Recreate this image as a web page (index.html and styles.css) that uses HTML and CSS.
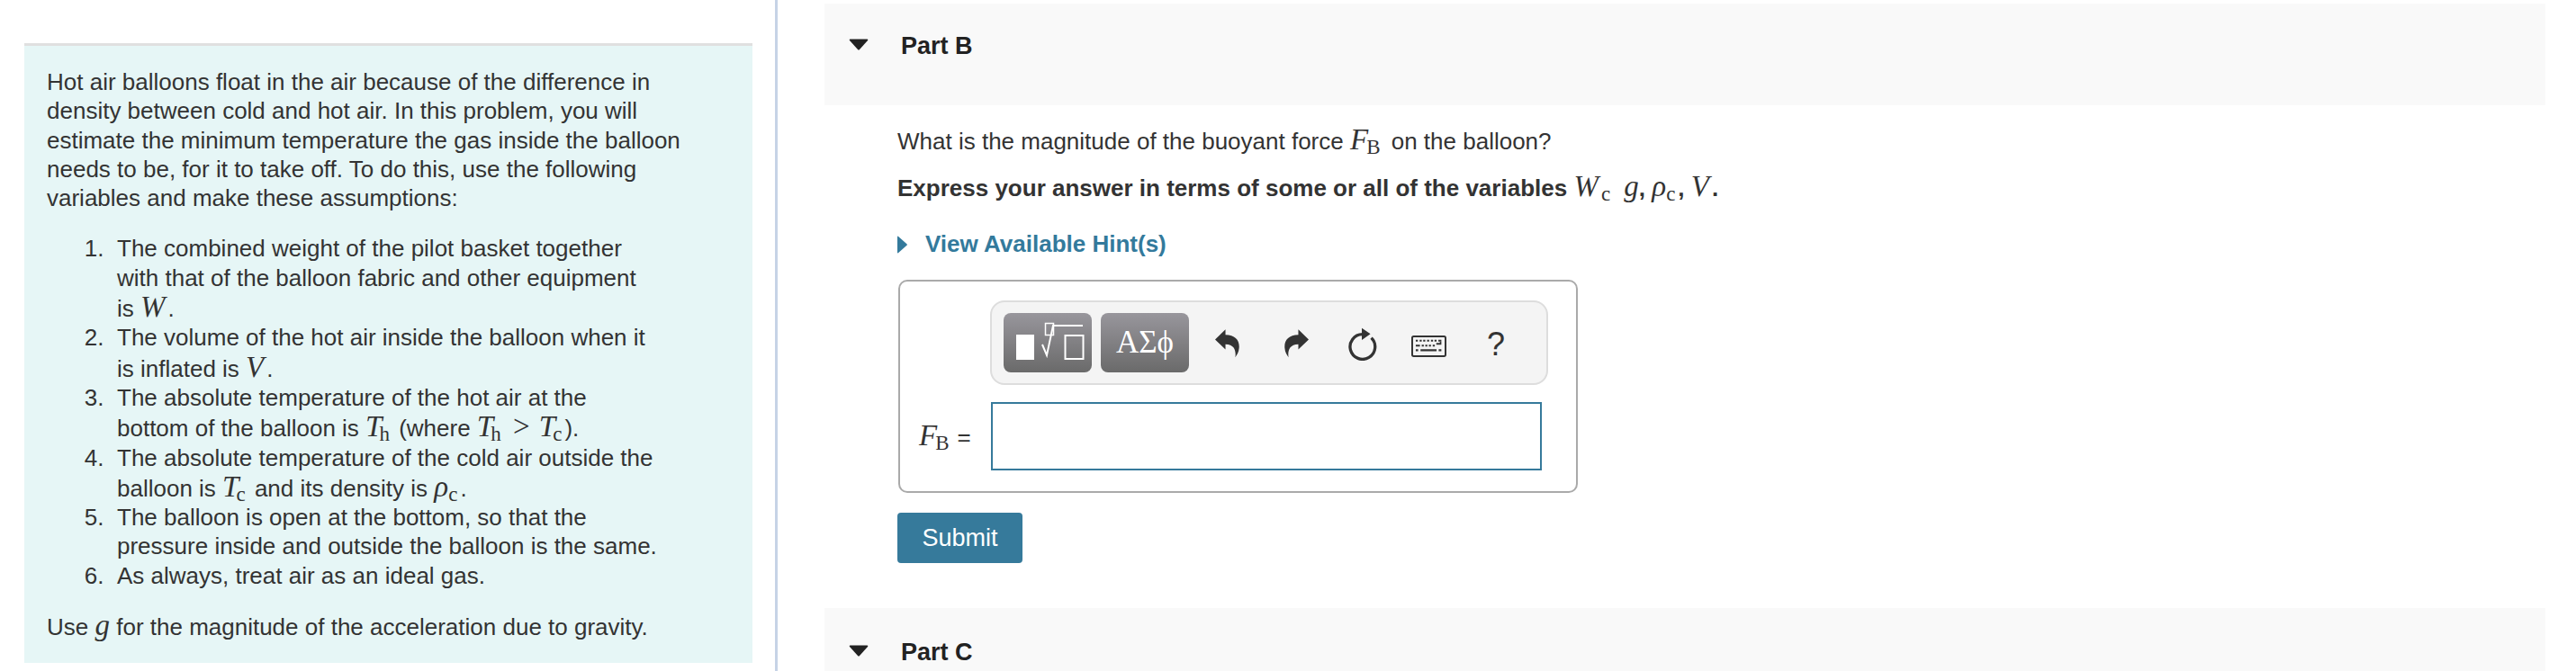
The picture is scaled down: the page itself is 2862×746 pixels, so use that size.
FILE: index.html
```html
<!DOCTYPE html>
<html lang="en">
<head>
<meta charset="utf-8">
<title>Part B</title>
<link rel="stylesheet" href="styles.css">
</head>
<body>
<div class="page">
  <aside class="intro-col">
    <section class="intro">
      <p>Hot air balloons float in the air because of the difference in density between cold and hot air. In this problem, you will estimate the minimum temperature the gas inside the balloon needs to be, for it to take off. To do this, use the following variables and make these assumptions:</p>
      <ol>
        <li>The combined weight of the pilot basket together with that of the balloon fabric and other equipment<br>is <span class="m m-w">W</span>.</li>
        <li>The volume of the hot air inside the balloon when it is inflated is <span class="m m-v">V</span>.</li>
        <li>The absolute temperature of the hot air at the bottom of the balloon is <span class="m">T<sub>h</sub></span> (where <span class="m">T<sub>h</sub></span> <span class="m-op">&gt;</span> <span class="m">T<sub>c</sub></span>).</li>
        <li>The absolute temperature of the cold air outside the balloon is <span class="m">T<sub>c</sub></span> and its density is <span class="m m-rho">ρ<sub>c</sub></span>.</li>
        <li>The balloon is open at the bottom, so that the pressure inside and outside the balloon is the same.</li>
        <li>As always, treat air as an ideal gas.</li>
      </ol>
      <p class="last">Use <span class="m m-g">g</span> for the magnitude of the acceleration due to gravity.</p>
    </section>
  </aside>
  <main class="parts">
    <header class="part-head">
      <svg class="caret" viewBox="0 0 22 13"><path d="M1.500 0.500H20.500Q22 0.500 21 2L12 12Q11 13 10 12L1 2Q0 0.500 1.500 0.500Z"/></svg>
      <h2>Part B</h2>
    </header>
    <div class="part-body">
      <p class="question">What is the magnitude of the buoyant force <span class="m m-f">F<sub>B</sub></span> on the balloon?</p>
      <p class="express">Express your answer in terms of some or all of the variables <span class="m m-w">W<sub>c</sub></span> <span class="m m-g2">g</span>, <span class="m m-rho">ρ<sub>c</sub></span>, <span class="m m-v">V</span>.</p>
      <div class="hint">
        <svg class="hint-caret" viewBox="0 0 11 20"><path d="M0 1.500Q0 0 1.200 1L10.500 9.200Q11.200 10 10.500 10.800L1.200 19Q0 20 0 18.500Z"/></svg>
        <span>View Available Hint(s)</span>
      </div>
      <div class="answer">
        <div class="toolbar">
          <button class="tool-btn" aria-label="Templates">
            <svg viewBox="0 0 98 66" class="tpl">
              <rect class="fill" x="14" y="24" width="20" height="28"/>
              <rect class="line thin" x="46.500" y="11.500" width="9" height="13"/>
              <path class="line" d="M43 35L48 47L55 14H88"/>
              <rect class="line" x="68.500" y="25" width="20" height="26"/>
            </svg>
          </button>
          <button class="tool-btn symbols">ΑΣϕ</button>
          <svg class="ico ico-undo" viewBox="57 88 82 95"><path d="M57 122L92 88V106C125 106 140 125 138 150C137 165 130 175 125 182C128 165 125 138 92 138V155Z"/></svg>
          <svg class="ico ico-redo" viewBox="288 88 82 95"><path d="M370 122L335 88V106C302 106 287 125 289 150C290 165 297 175 302 182C299 165 302 138 335 138V155Z"/></svg>
          <svg class="ico ico-reset" viewBox="495 80 102 112"><path class="ring" d="M545 103A42 42 0 1 0 575 115"/><path d="M543 82L572 102L543 122Z"/></svg>
          <svg class="ico ico-kbd" viewBox="710 114 118 72">
            <rect class="kbd-frame" x="713" y="117" width="112" height="66" rx="5"/>
            <path d="M725 128h7v6h-7zM738 128h7v6h-7zM750 128h7v6h-7zM763 128h7v6h-7zM776 128h7v6h-7zM788 128h7v6h-7zM801 128h10v6h-10z"/>
            <path d="M725 145h14v6h-14zM745 145h7v6h-7zM757 145h7v6h-7zM769 145h7v6h-7zM782 145h7v6h-7zM794 145h17v-11h-5v5h-12z"/>
            <path d="M725 160h8v7h-8zM741 160h54v7h-54zM802 160h9v7h-9z"/>
          </svg>
          <span class="help">?</span>
        </div>
        <div class="entry">
          <label class="entry-label"><span class="m m-f">F<sub>B</sub></span><span class="eq">=</span></label>
          <div class="entry-input"></div>
        </div>
      </div>
      <button class="submit">Submit</button>
    </div>
    <header class="part-head part-c">
      <svg class="caret" viewBox="0 0 22 13"><path d="M1.500 0.500H20.500Q22 0.500 21 2L12 12Q11 13 10 12L1 2Q0 0.500 1.500 0.500Z"/></svg>
      <h2>Part C</h2>
    </header>
  </main>
</div>
</body>
</html>
```
FILE: styles.css
```css
* { box-sizing: border-box; }
html, body { margin: 0; padding: 0; background: #fff; }
body {
  height: 746px;
  overflow: hidden;
  font-family: "Liberation Sans", Arial, sans-serif;
  font-size: 26px;
  line-height: 32.300px;
  color: #333;
}
.page { display: flex; height: 746px; }

.intro-col {
  width: 864px;
  height: 746px;
  padding: 48px 25px 0 27px;
  border-right: 3px solid #c6d3e6;
  flex: none;
}
.intro {
  height: 689px;
  padding: 24px 26px 0 25px;
  background: #e6f6f6;
  border-top: 3px solid #e0e0e0;
}
.intro p { margin: 0; }
.intro ol { margin: 24px 76px 0 0; padding: 0 0 0 78px; }
.intro li::marker { content: counter(list-item) ". \2009\200A "; }
.intro .last { margin-top: 23px; }

.m {
  font-family: "Liberation Serif", "Times New Roman", serif;
  font-style: italic;
  font-weight: 400;
  font-size: 33px;
  line-height: 1;
}
.m sub {
  font-style: normal;
  font-size: 23px;
  line-height: 0;
  vertical-align: -5px;
  margin-left: -3px;
  margin-right: 3px;
}
.m-w, .m-v { letter-spacing: 3px; }
.m-w sub { letter-spacing: 0; margin-left: 0; margin-right: 6px; }
.m-rho sub { margin-left: 0; }
.m-g2 { margin-left: 2px; }
.m-op { font-family: "Liberation Serif", serif; font-size: 33px; line-height: 1; margin: 0 3px; }
.m-f sub { margin-left: -2px; margin-right: 5px; }

.parts { width: 1998px; padding: 4px 0 0 52px; flex: none; }
.part-head {
  display: flex;
  height: 113px;
  width: 1912px;
  padding: 31px 0 0 27px;
  background: #f9f9f9;
}
.part-head h2 { margin: 0 0 0 36px; font-size: 27px; line-height: 32px; font-weight: 700; color: #222; }
.caret { width: 22px; height: 13px; margin-top: 8px; fill: #222; flex: none; }
.part-c { margin-top: 50px; height: 80px; padding-top: 33px; }

.part-body { padding: 22px 0 0 81px; }
.question { margin: 0; height: 44px; }
.express { margin: 8px 0 0; font-weight: 700; height: 44px; }

.hint { display: flex; align-items: flex-start; margin-top: 20px; color: #337a9c; font-weight: 700; height: 32px; }
.hint-caret { width: 11px; height: 20px; margin-top: 7px; fill: #337a9c; flex: none; }
.hint span { margin-left: 20px; }

.answer {
  width: 755px;
  height: 237px;
  margin: 24px 0 0 1px;
  padding: 21px 0 0 100px;
  border: 2px solid #aaa;
  border-radius: 10px;
}
.toolbar {
  display: flex;
  align-items: center;
  width: 620px;
  height: 94px;
  padding-left: 13px;
  background: #f4f4f4;
  border: 2px solid #ddd;
  border-radius: 16px;
}
.tool-btn {
  display: block;
  width: 98px;
  height: 66px;
  padding: 0;
  margin-right: 10px;
  border: 0;
  border-radius: 8px;
  background: linear-gradient(#98969c, #6a6a6a);
  color: #fff;
  flex: none;
}
.tool-btn svg { display: block; width: 98px; height: 66px; }
.symbols { font-family: "Liberation Serif", serif; font-size: 35px; line-height: 66px; margin-right: 0; }
.tpl .fill { fill: #fff; }
.tpl .line { fill: none; stroke: #fff; stroke-width: 2; }
.tpl .thin { stroke-width: 1.500; }

.ico { fill: #333; flex: none; display: block; }
.ico-undo { width: 27px; height: 32px; margin-left: 29px; margin-top: 2px; }
.ico-redo { width: 27px; height: 32px; margin-left: 50px; margin-top: 2px; }
.ico-reset { width: 34px; height: 37px; margin-left: 43px; margin-top: 2px; }
.ring { fill: none; stroke: #333; stroke-width: 10; }
.ico-kbd { width: 39px; height: 24px; margin-left: 37px; margin-top: 8px; }
.kbd-frame { fill: none; stroke: #333; stroke-width: 6; }
.help { font-size: 36px; line-height: 40px; margin-left: 45px; margin-top: 3px; color: #333; }

.entry { display: flex; align-items: center; margin-top: 19px; margin-left: -100px; }
.entry-label { display: flex; align-items: baseline; width: 101px; padding-left: 21px; }
.eq { margin-left: 4px; }
.entry-input { width: 612px; height: 76px; border: 2px solid #367a9b; background: #fff; }

.submit {
  display: block;
  width: 139px;
  height: 56px;
  margin-top: 22px;
  padding: 0;
  border: 0;
  border-radius: 4px;
  background: #367a9b;
  color: #fff;
  font-family: "Liberation Sans", Arial, sans-serif;
  font-size: 27px;
}
```
